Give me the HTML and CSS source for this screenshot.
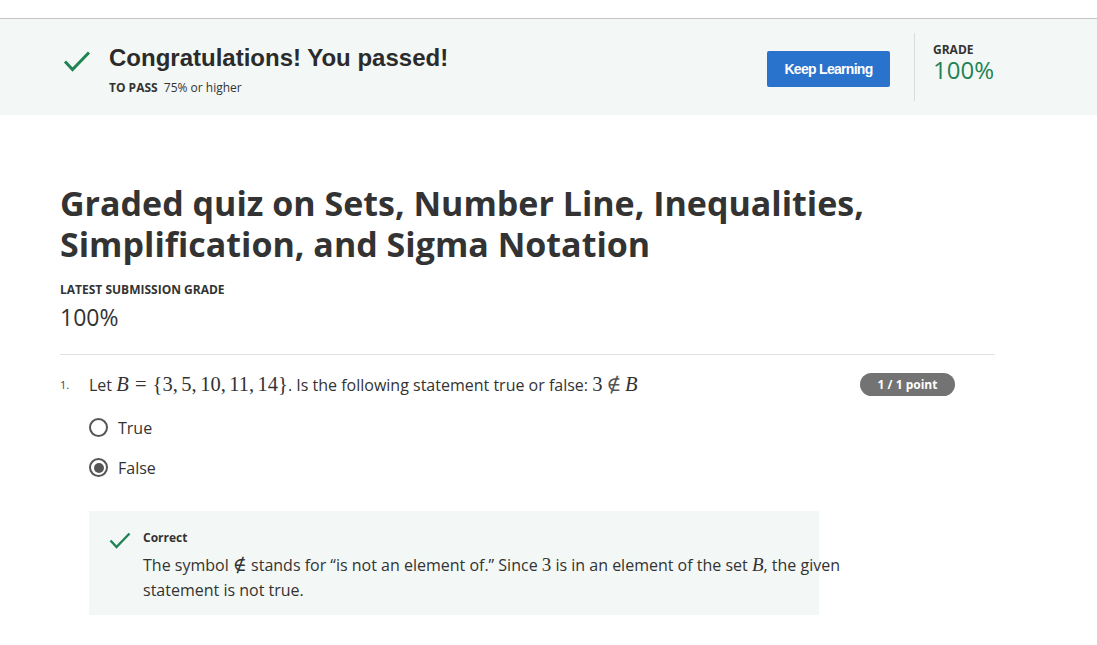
FILE: index.html
```html
<!DOCTYPE html>
<html>
<head>
<meta charset="utf-8">
<link rel="stylesheet" href="styles.css">
</head>
<body>
<div class="topgap"></div>
<header class="banner">
  <div class="banner-left">
    <svg class="check" width="28" height="22" viewBox="0 0 28 22"><path d="M2 11.5 L9.5 19.5 L26 2.5" fill="none" stroke="#1f8354" stroke-width="3"/></svg>
    <div class="banner-text">
      <h2 class="congrats">Congratulations! You passed!</h2>
      <div class="topass"><span class="lbl">TO PASS</span> 75% or higher</div>
    </div>
  </div>
  <div class="banner-right">
    <button class="keep">Keep Learning</button>
    <div class="divider"></div>
    <div class="gradebox">
      <div class="lbl grade-lbl">GRADE</div>
      <div class="grade-val">100%</div>
    </div>
  </div>
</header>

<main class="main">
  <h1 class="title">Graded quiz on Sets, Number Line, Inequalities, Simplification, and Sigma Notation</h1>
  <div class="lbl latest-lbl">LATEST SUBMISSION GRADE</div>
  <div class="latest-val">100%</div>
  <hr class="sep">

  <section class="question">
    <div class="qrow">
      <span class="qnum">1.</span>
      <div class="qtext">Let <span class="m"><i>B</i><span class="rel">=</span>{3,<span class="th"></span>5,<span class="th"></span>10,<span class="th"></span>11,<span class="th"></span>14}</span>. Is the following statement true or false: <span class="m">3<span class="rel2">∉</span><i>B</i></span></div>
      <span class="badge">1 / 1 point</span>
    </div>
    <div class="options">
      <label class="opt"><span class="radio"></span>True</label>
      <label class="opt"><span class="radio checked"></span>False</label>
    </div>
    <div class="feedback">
      <svg class="fcheck" width="22" height="17" viewBox="0 0 22 17"><path d="M1.5 8.5 L7.5 15 L20.5 1.5" fill="none" stroke="#1f8354" stroke-width="2.4"/></svg>
      <div class="ftext">
        <div class="correct">Correct</div>
        <p>The symbol <span class="m">∉</span> stands for “is not an element of.” Since <span class="m">3</span> is in an element of the set <span class="m"><i>B</i></span>, the given statement is not true.</p>
      </div>
    </div>
  </section>
</main>
</body>
</html>
```

FILE: styles.css
```css
* { box-sizing: border-box; }
body {
  margin: 0;
  font-family: "Open Sans", "Liberation Sans", sans-serif;
  color: #1f1f1f;
  background: #fff;
}
.topgap { height: 19px; border-bottom: 1px solid #c4c4c4; }
.banner {
  background: #f3f8f6;
  height: 96px;
  display: flex;
  justify-content: space-between;
  padding: 0 0 0 63px;
}
.banner-left { display: flex; align-items: flex-start; padding-top: 29px; }
.check { margin-top: 2px; margin-right: 18px; }
.congrats {
  margin: 0;
  font-family: "Liberation Sans", Arial, sans-serif;
  font-weight: bold;
  font-size: 24px;
  line-height: 20px;
  color: #2b2b2b;
}
.topass { margin-top: 11px; font-size: 12px; color: #333; }
.lbl { font-weight: 700; font-size: 12px; letter-spacing: 0; color: #333; }
.topass .lbl { margin-right: 3px; }
.banner-right { display: flex; align-items: flex-start; padding-right: 103px; }
.keep {
  margin-top: 32px;
  width: 123px;
  height: 36px;
  background: #2a73cc;
  color: #fff;
  border: none;
  border-radius: 2px;
  font-family: "Liberation Sans", Arial, sans-serif;
  font-weight: bold;
  font-size: 14px;
  letter-spacing: -0.7px;
}
.divider { width: 1px; height: 68px; margin: 14px 18px 0 24px; background: #dcdcdc; }
.gradebox { padding-top: 24px; }
.grade-lbl { line-height: 14px; }
.grade-val { font-size: 24px; color: #1f8354; line-height: 26px; }

.main { margin-left: 60px; width: 935px; padding-top: 68px; }
.title {
  margin: 0;
  font-size: 34px;
  line-height: 41px;
  font-weight: 700;
  color: #333;
}
.latest-lbl { margin-top: 18px; line-height: 14px; }
.latest-val { margin-top: 7px; font-size: 23px; line-height: 26px; color: #333; }
.sep { margin: 24px 0 0; border: none; border-top: 1px solid #e1e1e1; }

.question { padding-top: 17px; }
.qrow { display: flex; align-items: center; }
.qnum { width: 29px; font-size: 11px; color: #444; }
.qtext { flex: 1; font-size: 16px; color: #333; }
.m { font-family: "Liberation Serif", "DejaVu Serif", serif; font-size: 19.5px; }
.qtext .m { font-size: 20.5px; }
.rel { margin: 0 0.3em; }
.rel2 { margin: 0 0.18em; color: #555; }
.th { display: inline-block; width: 0.17em; }
.badge {
  margin-right: 40px;
  width: 95px;
  height: 23px;
  border-radius: 12px;
  background: #737373;
  color: #fff;
  font-weight: 700;
  font-size: 12px;
  display: flex; align-items: center; justify-content: center;
}
.options { padding-left: 29px; margin-top: 21px; display: flex; flex-direction: column; gap: 19px; }
.opt { display: flex; align-items: center; font-size: 16px; color: #333; height: 21px; }
.radio {
  width: 19px; height: 19px; border-radius: 50%;
  border: 2px solid #555; margin-right: 10px; position: relative; background: #fff;
}
.radio.checked::after {
  content: ""; position: absolute; left: 2.5px; top: 2.5px; width: 10px; height: 10px; border-radius: 50%; background: #555;
}
.feedback {
  margin: 33px 0 0 29px;
  width: 730px;
  height: 104px;
  background: #f3f8f6;
  display: flex;
  padding: 20px 0 0 20px;
}
.fcheck { margin-top: 1px; margin-right: 12px; flex: none; }
.ftext { flex: none; width: 720px; }
.correct { font-size: 12px; font-weight: 700; color: #333; line-height: 14px; }
.ftext p { margin: 7px 0 0; font-size: 16px; line-height: 25px; color: #333; }
.ftext .m { font-size: 19px; }
```
